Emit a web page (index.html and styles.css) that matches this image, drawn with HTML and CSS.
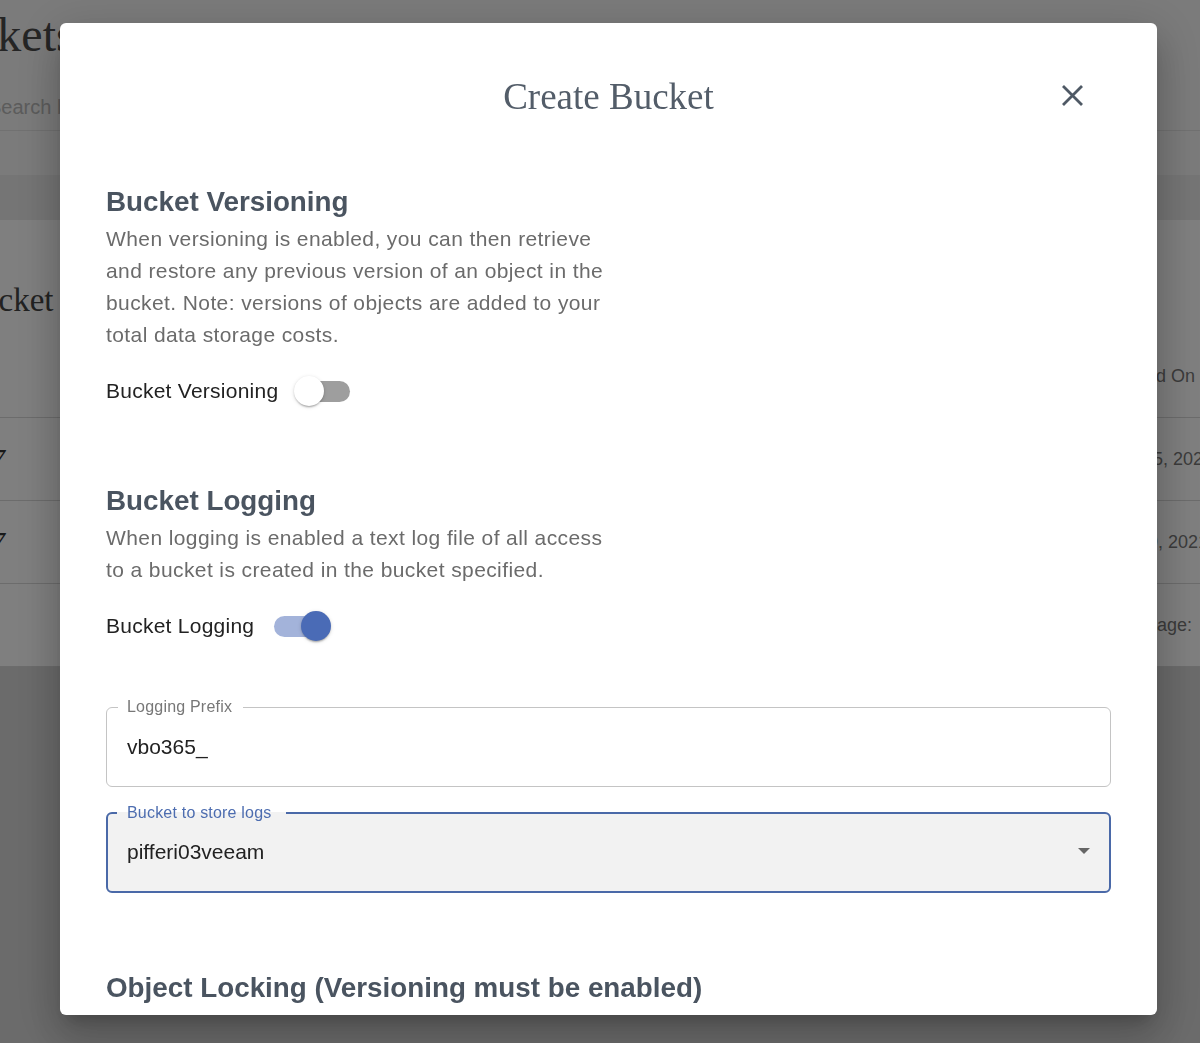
FILE: index.html
```html
<!DOCTYPE html>
<html lang="en">
<head>
  <meta charset="UTF-8">
  <meta name="viewport" content="width=device-width, initial-scale=1.0">
  <title>Buckets</title>
  <link rel="stylesheet" href="styles.css">
</head>
<body>
  <div class="page">
    <h1 class="page-title">Buckets</h1>
    <div class="search">Search buckets</div>
    <div class="toolbar"></div>
    <div class="card">
      <div class="card-title">Bucket List</div>
      <div class="row"><span class="name"></span><span class="date">Created On</span></div>
      <div class="row"><span class="name">7</span><span class="date shift">Mar 25, 2021</span></div>
      <div class="row"><span class="name">7</span><span class="date">Mar 19, 2021</span></div>
      <div class="row"><span class="name"></span><span class="date pager">Rows per page:</span></div>
    </div>
  </div>

  <div class="backdrop">
    <div class="modal">
      <div class="modal-header">
        <h2 class="modal-title">Create Bucket</h2>
        <button class="close" aria-label="Close">
          <svg width="23" height="23" viewBox="0 0 23 23">
            <path d="M2 2 L21 21 M21 2 L2 21" stroke="#4f5965" stroke-width="2.8" fill="none"/>
          </svg>
        </button>
      </div>

      <div class="section first">
        <div class="section-title">Bucket Versioning</div>
        <p class="section-text">When versioning is enabled, you can then retrieve<br>and restore any previous version of an object in the<br>bucket. Note: versions of objects are added to your<br>total data storage costs.</p>
        <div class="toggle-row">
          <span>Bucket Versioning</span>
          <span class="switch"><span class="thumb"></span></span>
        </div>
      </div>

      <div class="section">
        <div class="section-title">Bucket Logging</div>
        <p class="section-text">When logging is enabled a text log file of all access<br>to a bucket is created in the bucket specified.</p>
        <div class="toggle-row">
          <span>Bucket Logging</span>
          <span class="switch on"><span class="thumb"></span></span>
        </div>
      </div>

      <fieldset class="field">
        <legend>Logging Prefix</legend>
        <div class="field-value">vbo365_</div>
      </fieldset>

      <fieldset class="field select">
        <legend>Bucket to store logs</legend>
        <div class="field-value"><span>pifferi03veeam</span><span class="arrow"></span></div>
      </fieldset>

      <div class="section-title locking">Object Locking (Versioning must be enabled)</div>
    </div>
  </div>
</body>
</html>
```

FILE: styles.css
```css
html, body {
  margin: 0;
  height: 1043px;
  overflow: hidden;
  background: #d6d6d6;
  font-family: "Liberation Sans", Arial, sans-serif;
}

/* page behind the dialog */
.page {
  margin-left: -90px;
  width: 1400px;
  background: #f6f6f6;
}
.page-title {
  margin: 0;
  padding: 7px 0 0 10px;
  font: normal 48px/56px "Liberation Serif", serif;
  color: #4a4a4a;
}
.search {
  margin-top: 32px;
  padding: 0 0 11px 78px;
  font-size: 20px;
  line-height: 24px;
  color: #b8b8b8;
  border-bottom: 1px solid #e2e2e2;
}
.toolbar {
  margin-top: 44px;
  height: 45px;
  background: #ebebeb;
}
.card {
  background: #fff;
  padding-top: 60px;
}
.card-title {
  padding-left: 50px;
  font: 33px/40px "Liberation Serif", serif;
  color: #444;
  margin-bottom: 15px;
}
.row {
  display: grid;
  grid-template-columns: 95px 1097px 1fr;
  align-items: center;
  height: 82px;
  border-bottom: 1px solid #d8d8d8;
  font-size: 18px;
  color: #777;
}
.row .name {
  text-align: right;
  font: italic 30px "Liberation Serif", serif;
  color: #333;
}
.row .date { grid-column: 3; }
.row .date.shift { padding-left: 5px; }
.row .date.pager { margin-left: -36px; }

/* dialog */
.backdrop {
  position: fixed;
  inset: 0;
  background: rgba(0, 0, 0, 0.5);
  padding: 23px 0 0 60px;
}
.modal {
  width: 1097px;
  height: 992px;
  box-sizing: border-box;
  padding: 0 46px;
  background: #fff;
  border-radius: 6px;
  overflow: hidden;
  box-shadow: 0 11px 15px -7px rgba(0,0,0,0.2), 0 24px 38px 3px rgba(0,0,0,0.14), 0 9px 46px 8px rgba(0,0,0,0.12);
}
.modal-header {
  display: grid;
  grid-template-columns: 1fr auto 1fr;
  align-items: center;
  padding-top: 52px;
}
.modal-title {
  grid-column: 2;
  margin: 0;
  font: normal 37px/44px "Liberation Serif", serif;
  color: #535d69;
}
.close {
  grid-column: 3;
  justify-self: end;
  width: 23px;
  height: 23px;
  margin: 0 27px 4px 0;
  padding: 0;
  border: none;
  background: none;
}
.close svg { display: block; }

.section { margin-top: 74px; }
.section.first { margin-top: 67px; }
.section-title {
  font-weight: bold;
  font-size: 27.8px;
  line-height: 32px;
  color: #4a5460;
}
.section-text {
  margin: 5px 0 0;
  font-size: 21px;
  line-height: 32px;
  letter-spacing: 0.4px;
  color: #6b6b6b;
}
.toggle-row {
  display: flex;
  align-items: center;
  gap: 20px;
  height: 40px;
  margin-top: 20px;
  font-size: 21px;
  letter-spacing: 0.25px;
  color: #222;
}
.switch {
  position: relative;
  width: 52px;
  height: 21px;
  border-radius: 10.5px;
  background: #9e9e9e;
}
.switch .thumb {
  position: absolute;
  top: -4.5px;
  left: -4.5px;
  width: 30px;
  height: 30px;
  border-radius: 50%;
  background: #fff;
  box-shadow: 0 3px 2px -2px rgba(0,0,0,0.2), 0 1px 2px 0 rgba(0,0,0,0.14), 0 1px 4px 0 rgba(0,0,0,0.12);
}
.switch.on { background: #a3b3da; }
.switch.on .thumb {
  left: 26.5px;
  background: #4a6bb6;
}

.field {
  margin: 53px 0 0;
  padding: 0 20px 29px 11px;
  border: 1px solid #c4c4c4;
  border-radius: 6px;
  min-width: 0;
}
.field legend {
  padding: 0 11px 0 9px;
  font-size: 16px;
  line-height: 16px;
  letter-spacing: 0.2px;
  color: #777;
}
.field-value {
  padding: 21px 0 0 9px;
  font-size: 21px;
  line-height: 21px;
  color: #222;
}
.field.select {
  margin-top: 18px;
  padding: 0 19px 29.5px 9px;
  border: 2px solid #4a69a8;
  background: #f2f2f2;
}
.field.select legend {
  padding: 0 14px 0 10px;
  color: #4d6db0;
}
.field.select .field-value {
  display: flex;
  justify-content: space-between;
  align-items: center;
  padding: 19.5px 0 0 10px;
}
.arrow {
  width: 0;
  height: 0;
  border-left: 6px solid transparent;
  border-right: 6px solid transparent;
  border-top: 6px solid #666;
}

.locking { margin-top: 79px; }
```
